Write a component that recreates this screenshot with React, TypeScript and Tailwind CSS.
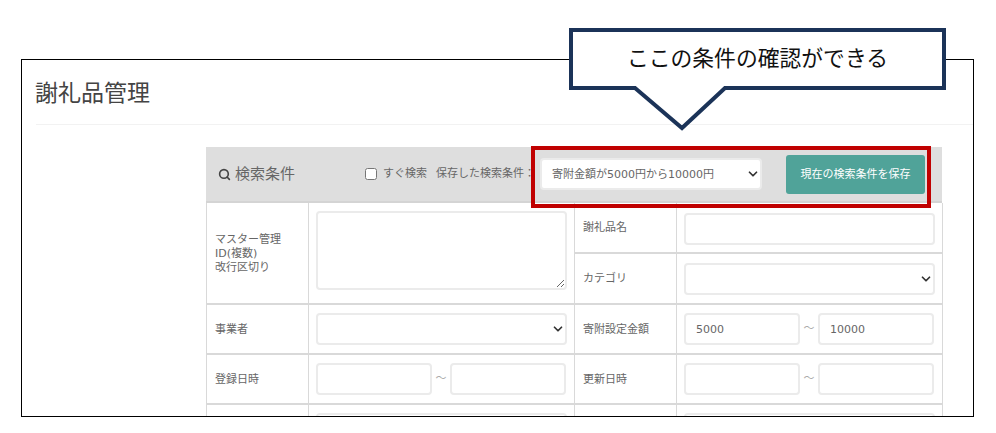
import { ReactNode } from "react"
import { ChevronDown, Search } from "lucide-react"

const field = "h-8 rounded-[4px] border-2 border-[#ebebeb] bg-white px-[10px] text-[11px] text-[#666] outline-none"

function Label({ children, className = "" }: { children: ReactNode; className?: string }) {
  return (
    <div className={`flex items-center border-b-2 border-r border-[#d9d9d9] pl-[8px] pt-px text-[11px] leading-[14px] text-[#666] ${className}`}>
      <div>{children}</div>
    </div>
  )
}

function Value({ children, className = "" }: { children?: ReactNode; className?: string }) {
  return <div className={`flex items-center border-b-2 border-r border-[#d9d9d9] pl-[7px] ${className}`}>{children}</div>
}

function SelectBox({ value = "", className = "" }: { value?: string; className?: string }) {
  return (
    <div className={`relative ${className}`}>
      <select defaultValue={value} className={`${field} w-full appearance-none pt-[2px]`}>
        <option value={value}>{value}</option>
      </select>
      <ChevronDown className="pointer-events-none absolute right-[2px] top-[9px] h-[14px] w-[14px] text-[#333]" strokeWidth={3} />
    </div>
  )
}

function Range({ from = "", to = "" }: { from?: string; to?: string }) {
  return (
    <div className="flex items-center">
      <input defaultValue={from} className={`${field} w-[116px]`} />
      <span className="w-[18px] text-center text-[11px] text-[#aaa]">～</span>
      <input defaultValue={to} className={`${field} w-[116px]`} />
    </div>
  )
}

export default function App() {
  return (
    <div className="relative h-[433px] w-[996px] overflow-hidden bg-white pl-[21px] pt-[59px] font-['DejaVu_Sans','Noto_Sans_CJK_JP',sans-serif]">
      <div className="h-[358px] w-[953px] overflow-hidden border border-black pl-[14px]">
        <div className="flex h-[65px] items-center border-b border-[#f2f2f2] pt-[2px]">
          <h1 className="-ml-px text-[23px] font-normal text-[#444]">謝礼品管理</h1>
        </div>

        <div className="ml-[170px] mt-[22px] w-[736px]">
          {/* header */}
          <div className="flex h-[56px] items-center border-b-2 border-[#d4d4d4] bg-[#dedede] pl-[12px] text-[#666]">
            <Search className="h-[13px] w-[13px] text-[#444]" strokeWidth={3} />
            <span className="ml-[4px] text-[15px]">検索条件</span>
            <input type="checkbox" className="ml-[70px] h-[12px] w-[12px]" />
            <span className="ml-[6px] text-[11px]">すぐ検索</span>
            <span className="ml-[9px] w-[104px] whitespace-nowrap text-[11px]">保存した検索条件：</span>
            <SelectBox value="寄附金額が5000円から10000円" className="w-[222px]" />
            <button className="ml-[24px] h-[39px] w-[139px] rounded-[3px] bg-[#50a399] pt-[2px] text-[11px] text-white">
              現在の検索条件を保存
            </button>
          </div>

          {/* conditions */}
          <div className="grid grid-cols-[102px_266px_102px_266px] grid-rows-[51px_51px_50px_50px_50px] border-l border-[#d9d9d9]">
            <Label className="row-span-2">
              マスター管理
              <br />
              ID(複数)
              <br />
              改行区切り
            </Label>
            <Value className="row-span-2 !items-start pt-[8px]">
              <textarea className="h-[79px] w-[251px] rounded-[4px] border-2 border-[#ebebeb] outline-none" />
            </Value>
            <Label>謝礼品名</Label>
            <Value className="pt-[2px]">
              <input className={`${field} w-[251px]`} />
            </Value>
            <Label>カテゴリ</Label>
            <Value>
              <SelectBox className="w-[251px]" />
            </Value>

            <Label>事業者</Label>
            <Value>
              <SelectBox className="w-[251px]" />
            </Value>
            <Label>寄附設定金額</Label>
            <Value>
              <Range from="5000" to="10000" />
            </Value>

            <Label>登録日時</Label>
            <Value>
              <Range />
            </Value>
            <Label>更新日時</Label>
            <Value>
              <Range />
            </Value>

            <Label> </Label>
            <Value>
              <input className={`${field} w-[251px]`} />
            </Value>
            <Label> </Label>
            <Value>
              <input className={`${field} w-[251px]`} />
            </Value>
          </div>
        </div>
      </div>

      {/* red highlight */}
      <div className="absolute left-[531px] top-[146px] h-[62px] w-[400px] border-4 border-[#c00000]" />

      {/* callout */}
      <svg className="absolute left-0 top-0" width="996" height="433" fill="none">
        <path
          d="M571 30H944V88H725L682 128L635 88H571Z"
          fill="#fff"
          stroke="#1b3358"
          strokeWidth="4"
          strokeLinejoin="miter"
        />
      </svg>
      <div className="absolute left-[571px] top-[30px] flex h-[58px] w-[373px] items-center justify-center text-[21.8px] text-[#111]">
        ここの条件の確認ができる
      </div>
    </div>
  )
}
